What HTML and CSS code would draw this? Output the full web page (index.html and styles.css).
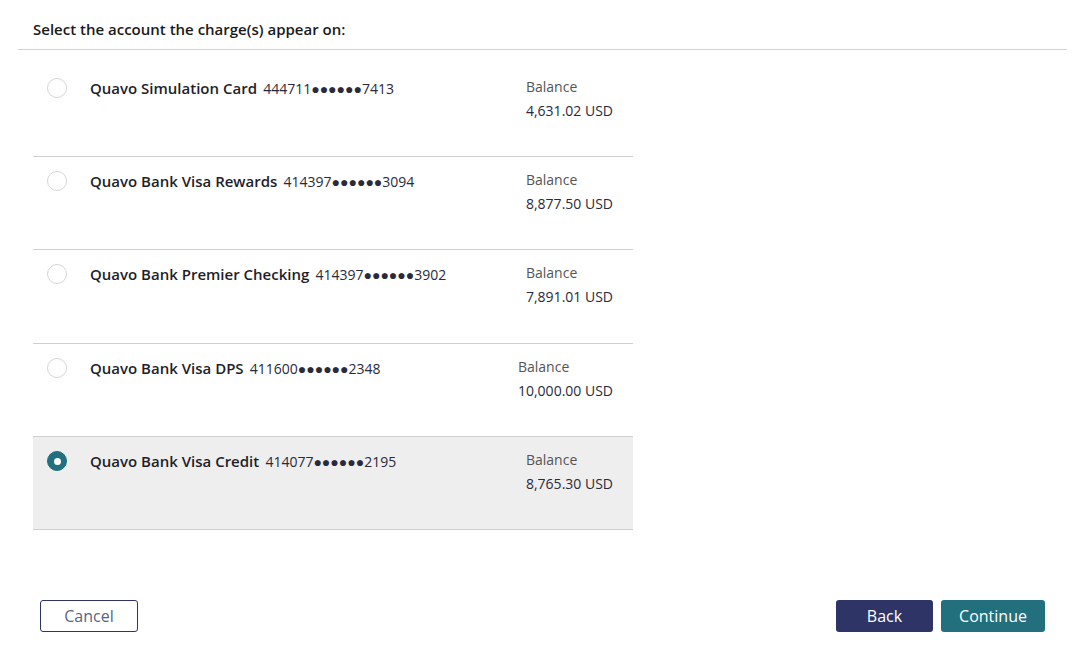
FILE: index.html
```html
<!DOCTYPE html>
<html>
<head>
<meta charset="utf-8">
<link rel="stylesheet" href="styles.css">
</head>
<body>
<div class="page">
  <div class="header">Select the account the charge(s) appear on:</div>
  <div class="list">
    <div class="row">
      <span class="radio"></span>
      <div class="name"><span class="title">Quavo Simulation Card</span> <span class="num">444711●●●●●●7413</span></div>
      <div class="bal"><div class="lbl">Balance</div><div class="val">4,631.02 USD</div></div>
    </div>
    <div class="row">
      <span class="radio"></span>
      <div class="name"><span class="title">Quavo Bank Visa Rewards</span> <span class="num">414397●●●●●●3094</span></div>
      <div class="bal"><div class="lbl">Balance</div><div class="val">8,877.50 USD</div></div>
    </div>
    <div class="row">
      <span class="radio"></span>
      <div class="name"><span class="title">Quavo Bank Premier Checking</span> <span class="num">414397●●●●●●3902</span></div>
      <div class="bal"><div class="lbl">Balance</div><div class="val">7,891.01 USD</div></div>
    </div>
    <div class="row">
      <span class="radio"></span>
      <div class="name"><span class="title">Quavo Bank Visa DPS</span> <span class="num">411600●●●●●●2348</span></div>
      <div class="bal"><div class="lbl">Balance</div><div class="val">10,000.00 USD</div></div>
    </div>
    <div class="row selected">
      <span class="radio checked"></span>
      <div class="name"><span class="title">Quavo Bank Visa Credit</span> <span class="num">414077●●●●●●2195</span></div>
      <div class="bal"><div class="lbl">Balance</div><div class="val">8,765.30 USD</div></div>
    </div>
  </div>
  <div class="actions">
    <button class="btn cancel">Cancel</button>
    <div class="right">
      <button class="btn back">Back</button>
      <button class="btn continue">Continue</button>
    </div>
  </div>
</div>
</body>
</html>
```

FILE: styles.css
```css
html, body {
  margin: 0;
  padding: 0;
  background: #fff;
  font-family: "Open Sans", "Liberation Sans", sans-serif;
  color: #222;
}
.page {
  width: 1083px;
  height: 667px;
  position: relative;
}
.header {
  margin: 0 16px 0 18px;
  padding: 19px 0 0 15px;
  height: 30px;
  border-bottom: 1px solid #d4d4d4;
  font-size: 15px;
  font-weight: 600;
  line-height: 20px;
  color: #1a1a1a;
}
.list {
  width: 600px;
  margin-left: 33px;
  padding-top: 14px;
}
.row {
  display: flex;
  align-items: flex-start;
  height: 93px;
  border-bottom: 1px solid #cfcfcf;
  box-sizing: border-box;
}
.row:nth-child(3) { height: 94px; }
.row.selected { background: #eeeeee; }
.radio {
  flex: none;
  width: 18px;
  height: 18px;
  border: 1px solid #d6d6d6;
  border-radius: 50%;
  background: #fff;
  margin: 14px 0 0 14px;
  box-sizing: content-box;
}
.radio.checked {
  background: #226f7e;
  border-color: #226f7e;
  position: relative;
}
.radio.checked::after {
  content: "";
  position: absolute;
  width: 7px;
  height: 7px;
  border-radius: 50%;
  background: #fff;
  left: 5.5px;
  top: 5.5px;
}
.name {
  margin-left: 23px;
  padding-top: 14px;
  line-height: 20px;
  white-space: nowrap;
}
.title {
  font-size: 15px;
  font-weight: 600;
  color: #1e1e2a;
  margin-right: 2px;
}
.num {
  font-size: 14px;
  color: #2a2a3a;
}
.bal {
  margin-left: auto;
  margin-right: 20px;
  padding-top: 11px;
  line-height: 24px;
}
.lbl {
  font-size: 14px;
  color: #555;
}
.val {
  font-size: 14px;
  color: #2a2a3a;
}
.actions {
  position: absolute;
  left: 40px;
  right: 38px;
  top: 600px;
  display: flex;
  justify-content: space-between;
}
.right {
  display: flex;
  gap: 8px;
}
.btn {
  font-family: "Open Sans", "Liberation Sans", sans-serif;
  font-size: 16px;
  height: 32px;
  border-radius: 3px;
  border: 1px solid transparent;
  padding: 0;
  cursor: pointer;
}
.cancel {
  width: 98px;
  background: #fff;
  border-color: #2e3566;
  color: #586684;
}
.back {
  width: 97px;
  background: #2e3566;
  color: #fff;
}
.continue {
  width: 104px;
  background: #226f7e;
  color: #fff;
}
```
